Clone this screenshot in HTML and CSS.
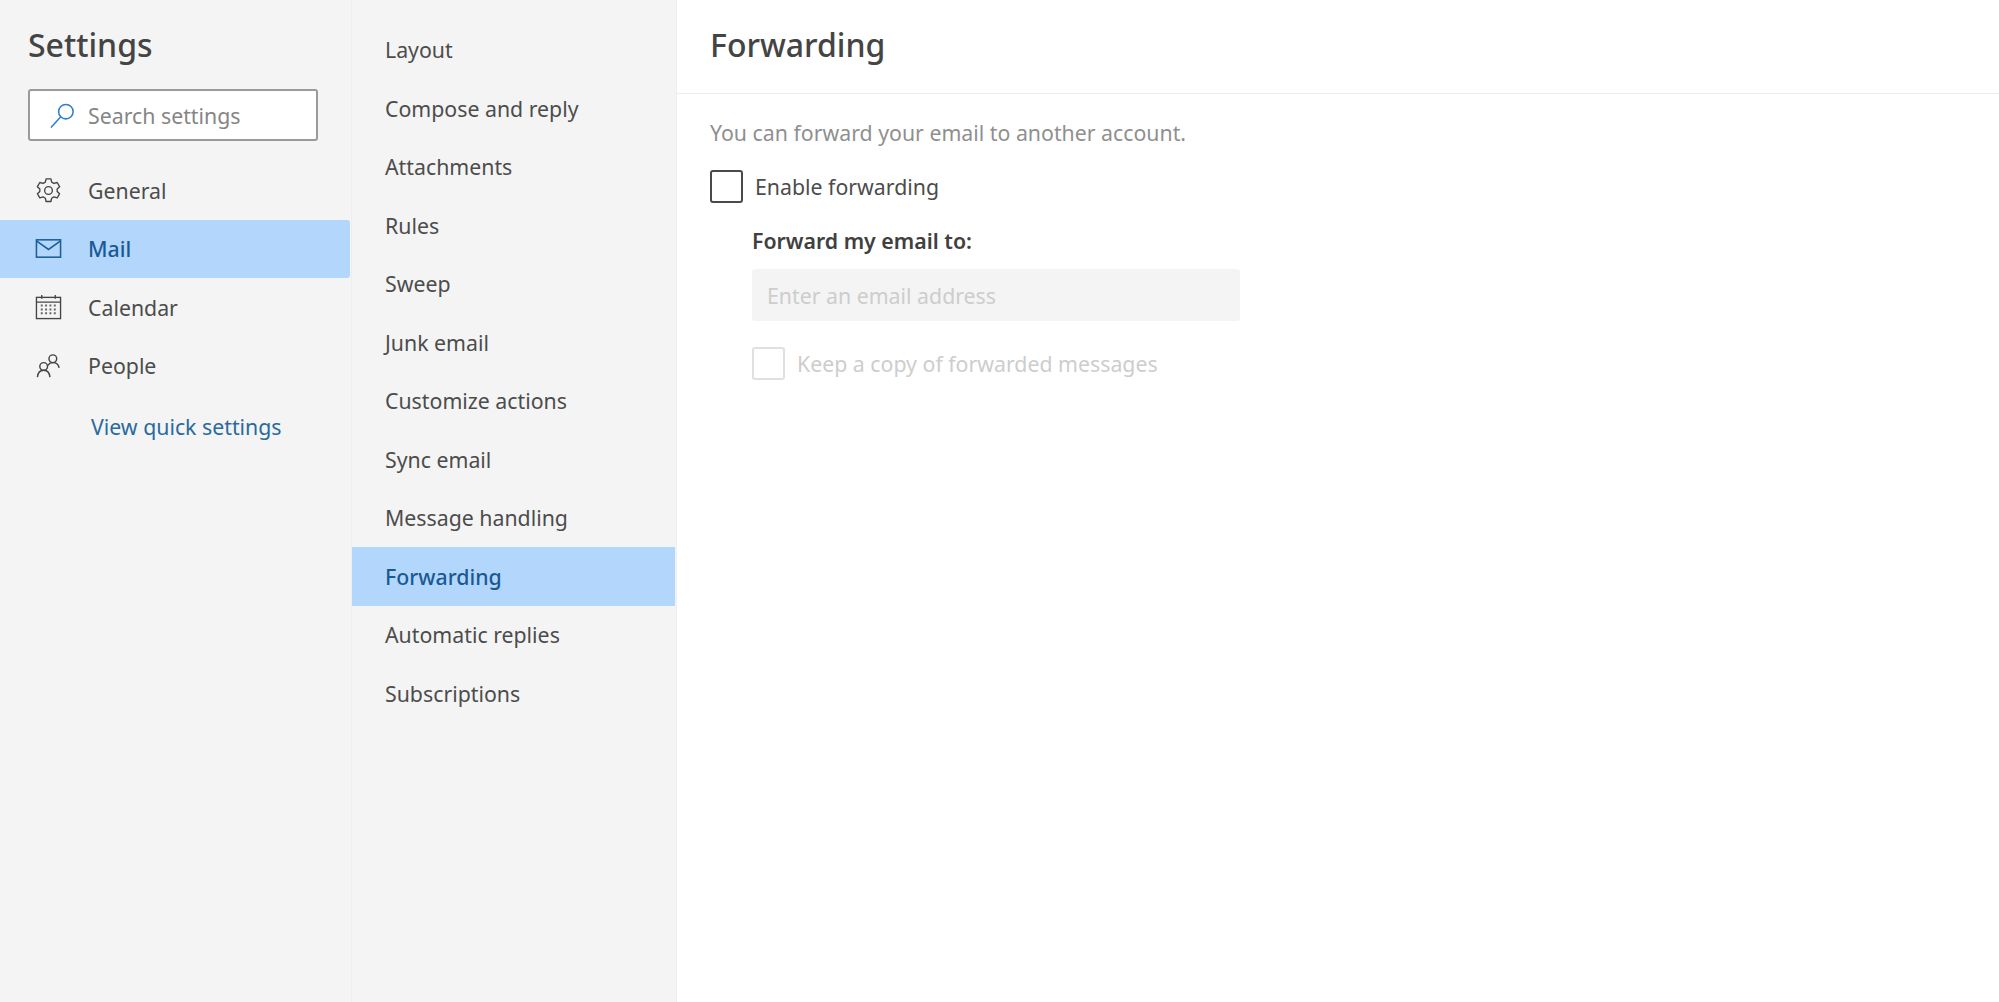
FILE: index.html
```html
<!DOCTYPE html>
<html lang="en">
<head>
    <meta charset="UTF-8">
    <meta name="viewport" content="width=device-width, initial-scale=1.0">
    <title>Settings - Forwarding</title>
    <link rel="stylesheet" href="styles.css">
</head>
<body>
    <div class="settings">
        <div class="nav">
            <h2 class="nav-title">Settings</h2>
            <div class="search">
                <svg class="search-icon" viewBox="0 0 28 28" fill="none" stroke="#2f7fd0" stroke-width="1.6">
                    <circle cx="17.5" cy="10" r="7.5"/>
                    <path d="M12 15.5 L2.5 26" stroke-linecap="round"/>
                </svg>
                <span>Search settings</span>
            </div>
            <div class="nav-list">
                <div class="nav-item">
                    <svg class="nav-icon" viewBox="0 0 28 28" fill="none" stroke="#444" stroke-width="1.4" stroke-linejoin="round">
                        <circle cx="14" cy="14" r="4"/>
                        <path d="M11.5 2 h5 l.8 3.4 2.3 1.3 3.4-1 2.5 4.3-2.5 2.4 v2.6 l2.5 2.4-2.5 4.3-3.4-1-2.3 1.3-.8 3.4 h-5 l-.8-3.4-2.3-1.3-3.4 1-2.5-4.3 2.5-2.4 v-2.6 l-2.5-2.4 2.5-4.3 3.4 1 2.3-1.3z"/>
                    </svg>
                    General
                </div>
                <div class="nav-item active">
                    <svg class="nav-icon" viewBox="0 0 28 28" fill="none" stroke="#1a5f99" stroke-width="1.6">
                        <rect x="1.5" y="5" width="25" height="18"/>
                        <path d="M1.5 6 L14 15 L26.5 6"/>
                    </svg>
                    Mail
                </div>
                <div class="nav-item">
                    <svg class="nav-icon" viewBox="0 0 28 28" fill="none" stroke="#444" stroke-width="1.4">
                        <rect x="1.5" y="3.5" width="25" height="22"/>
                        <path d="M1.5 8.5 H26.5 M7 1 V5 M21 1 V5"/>
                        <path d="M6 12 H22 M6 16 H22 M6 20 H22" stroke-width="2" stroke-dasharray="2 2.5" stroke="#666"/>
                    </svg>
                    Calendar
                </div>
                <div class="nav-item">
                    <svg class="nav-icon" viewBox="0 0 28 28" fill="none" stroke="#444" stroke-width="1.5">
                        <circle cx="18.5" cy="7" r="4"/>
                        <path d="M13.5 14 C14.5 11.5 16.5 11 18.5 11 C22 11 24.5 13 25 16.5"/>
                        <circle cx="9" cy="15" r="4"/>
                        <path d="M2.5 26 C3 21.5 5.5 19 9 19 C12.5 19 15 21.5 15.500 26"/>
                    </svg>
                    People
                </div>
            </div>
            <a class="quick-link" href="#">View quick settings</a>
        </div>

        <div class="subnav">
            <div class="subnav-item">Layout</div>
            <div class="subnav-item">Compose and reply</div>
            <div class="subnav-item">Attachments</div>
            <div class="subnav-item">Rules</div>
            <div class="subnav-item">Sweep</div>
            <div class="subnav-item">Junk email</div>
            <div class="subnav-item">Customize actions</div>
            <div class="subnav-item">Sync email</div>
            <div class="subnav-item">Message handling</div>
            <div class="subnav-item active">Forwarding</div>
            <div class="subnav-item">Automatic replies</div>
            <div class="subnav-item">Subscriptions</div>
        </div>

        <div class="content">
            <div class="content-header">
                <h2>Forwarding</h2>
            </div>
            <div class="content-body">
                <p class="desc">You can forward your email to another account.</p>
                <div class="check-row">
                    <span class="checkbox"></span>
                    <span>Enable forwarding</span>
                </div>
                <div class="forward-form">
                    <div class="form-label">Forward my email to:</div>
                    <div class="email-input">Enter an email address</div>
                    <div class="check-row disabled">
                        <span class="checkbox"></span>
                        <span>Keep a copy of forwarded messages</span>
                    </div>
                </div>
            </div>
        </div>
    </div>
</body>
</html>
```
FILE: styles.css
```css
* {
    box-sizing: border-box;
}
html, body {
    height: 100%;
}
body {
    margin: 0;
    font-family: "Noto Sans", "Open Sans", sans-serif;
    font-size: 21.3px;
    color: #4c4c4c;
    background-color: #fff;
}
h2 {
    margin: 0;
    font-size: 32px;
    font-weight: 500;
    color: #444;
}
.settings {
    display: flex;
    height: 1002px;
    overflow: hidden;
}

/* first column */
.nav {
    width: 352px;
    flex-shrink: 0;
    background-color: #f4f4f4;
    border-right: 1px solid #eee;
}
.nav-title {
    padding: 22px 0 0 28px;
    line-height: 46px;
}
.search {
    display: flex;
    align-items: center;
    width: 290px;
    height: 52px;
    margin: 21px 0 20px 28px;
    padding-left: 19px;
    background: white;
    border: 2px solid #9a9a9a;
    border-radius: 3px;
    color: #858585;
}
.search-icon {
    width: 27px;
    height: 27px;
    margin-right: 12px;
}
.nav-item {
    display: flex;
    align-items: center;
    height: 58.5px;
    padding-left: 35px;
    margin-right: 1px;
}
.nav-icon {
    width: 27px;
    height: 27px;
    margin-right: 26px;
}
.nav-item.active {
    background-color: #b3d6fc;
    color: #1a5a94;
    font-weight: 500;
    border-radius: 0 3px 3px 0;
}
.quick-link {
    display: block;
    margin: 17px 0 0 91px;
    color: #2a6a9e;
    text-decoration: none;
}

/* second column */
.subnav {
    width: 325px;
    flex-shrink: 0;
    padding-top: 20.5px;
    background-color: #f4f4f4;
    border-right: 1px solid #eee;
}
.subnav-item {
    display: flex;
    align-items: center;
    height: 58.5px;
    padding-left: 33px;
    margin-right: 1px;
}
.subnav-item.active {
    background-color: #b3d6fc;
    color: #1a5a94;
    font-weight: 500;
}

/* main panel */
.content {
    flex: 1;
}
.content-header {
    height: 94px;
    padding: 22px 0 0 33px;
    line-height: 46px;
    border-bottom: 1px solid #ececec;
}
.content-body {
    padding: 24px 0 0 33px;
}
.desc {
    margin: 0 0 23px;
    line-height: 29px;
    color: #8f8f8f;
}
.check-row {
    display: flex;
    align-items: center;
    gap: 12px;
    height: 33px;
}
.checkbox {
    width: 33px;
    height: 33px;
    background: white;
    border: 2px solid #4a4a4a;
    border-radius: 3px;
}
.forward-form {
    padding: 23px 0 0 42px;
}
.form-label {
    line-height: 30px;
    font-weight: 600;
    color: #404040;
}
.email-input {
    display: flex;
    align-items: center;
    width: 488px;
    height: 52px;
    margin: 13px 0 26px;
    padding-left: 15px;
    background-color: #f4f4f4;
    border-radius: 3px;
    color: #cdcdcd;
}
.check-row.disabled {
    color: #cdcdcd;
}
.check-row.disabled .checkbox {
    border-color: #e0e0e0;
}
```
